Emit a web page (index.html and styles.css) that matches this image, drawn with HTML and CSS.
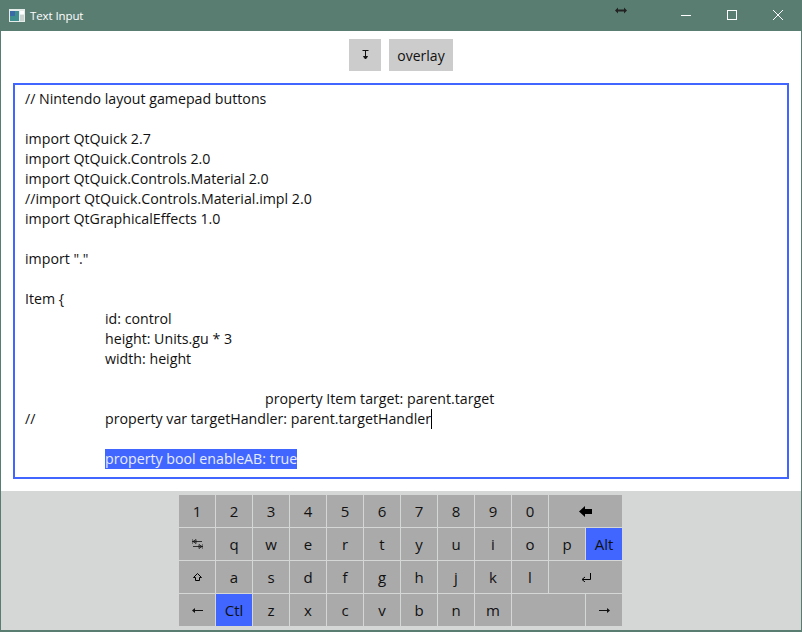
FILE: index.html
```html
<!DOCTYPE html>
<html lang="en">
<head>
<meta charset="utf-8">
<title>Text Input</title>
<link rel="stylesheet" href="styles.css">
</head>
<body>
<div class="window">
  <header class="titlebar">
    <svg class="app-icon" width="16" height="13" viewBox="0 0 16 13"><rect width="16" height="13" fill="#e6ecea"/><rect x="1" y="2" width="9" height="10" fill="#3f8f8f"/><rect x="1" y="2" width="5" height="5" fill="#3b6aa8"/><rect x="11" y="2" width="4" height="3" fill="#fff"/><rect x="11" y="6" width="4" height="6" fill="#c9d2cf"/></svg>
    <span class="title">Text Input</span>
    <div class="winbtns">
      <svg class="winbtn" width="46" height="31" viewBox="0 0 46 31"><path d="M18 15.500h10" stroke="#fff" fill="none"/></svg>
      <svg class="winbtn" width="46" height="31" viewBox="0 0 46 31"><rect x="18.500" y="10.500" width="9" height="9" stroke="#fff" fill="none"/></svg>
      <svg class="winbtn" width="46" height="31" viewBox="0 0 46 31"><path d="M18 10l10 10M28 10L18 20" stroke="#fff" fill="none"/></svg>
    </div>
  </header>
  <svg class="resize-cursor" width="12" height="7" viewBox="0 0 12 7"><path d="M0 3.500L3 .5V2.500H9V.5L12 3.500 9 6.500V4.500H3V6.500Z" fill="#222"/></svg>
  <main class="content">
    <div class="toolbar">
      <button class="tool tool-icon"><svg width="7" height="10" viewBox="0 0 7 10"><path d="M.5 .5h6M3.500 .5v8M1.500 6.500l2 2.500 2-2.500Z" stroke="#111" fill="#111"/></svg></button>
      <button class="tool tool-text">overlay</button>
    </div>
    <div class="editor"><pre class="code">// Nintendo layout gamepad buttons

import QtQuick 2.7
import QtQuick.Controls 2.0
import QtQuick.Controls.Material 2.0
//import QtQuick.Controls.Material.impl 2.0
import QtGraphicalEffects 1.0

import "."

Item {
	id: control
	height: Units.gu * 3
	width: height

			property Item target: parent.target
//	property var targetHandler: parent.targetHandler<span class="caret"></span>

	<span class="selected">property bool enableAB: true</span></pre></div>
  </main>
  <section class="kb-panel">
    <div class="keyboard">
      <div class="key">1</div><div class="key">2</div><div class="key">3</div><div class="key">4</div><div class="key">5</div><div class="key">6</div><div class="key">7</div><div class="key">8</div><div class="key">9</div><div class="key">0</div>
      <div class="key span2"><svg width="13" height="11" viewBox="0 0 13 11"><path d="M0 5.500L6 0V3H13V8H6V11Z" fill="#000"/></svg></div>
      <div class="key"><svg width="11" height="10" viewBox="0 0 11 10"><path d="M0 2.500h10M0 0v5M1 2.500l3-2v4ZM1 7.500h10M11 5v5M10 7.500l-3-2v4Z" stroke="#111" stroke-width=".8" fill="none"/></svg></div>
      <div class="key">q</div><div class="key">w</div><div class="key">e</div><div class="key">r</div><div class="key">t</div><div class="key">y</div><div class="key">u</div><div class="key">i</div><div class="key">o</div><div class="key">p</div>
      <div class="key key-on">Alt</div>
      <div class="key"><svg width="9" height="8" viewBox="0 0 9 8"><path d="M4.500 .5L8.500 4.500H6.500V7.500H2.500V4.500H.5Z" stroke="#000" fill="none"/></svg></div>
      <div class="key">a</div><div class="key">s</div><div class="key">d</div><div class="key">f</div><div class="key">g</div><div class="key">h</div><div class="key">j</div><div class="key">k</div><div class="key">l</div>
      <div class="key span2"><svg width="10" height="9" viewBox="0 0 10 9"><path d="M9.500 0V6.500H1.500M4 4L1 6.500 4 9" stroke="#000" fill="none"/></svg></div>
      <div class="key"><svg width="11" height="5" viewBox="0 0 11 5"><path d="M0 2.500L3 0V2H11V3H3V5Z" fill="#111"/></svg></div>
      <div class="key key-on">Ctl</div>
      <div class="key">z</div><div class="key">x</div><div class="key">c</div><div class="key">v</div><div class="key">b</div><div class="key">n</div><div class="key">m</div>
      <div class="key span2"></div>
      <div class="key"><svg width="11" height="5" viewBox="0 0 11 5"><path d="M11 2.500L8 0V2H0V3H8V5Z" fill="#111"/></svg></div>
    </div>
  </section>
</div>
</body>
</html>
```
FILE: styles.css
```css
* { box-sizing: border-box; }
html, body { margin: 0; height: 100%; }
body { font-family: "Open Sans", "Noto Sans", sans-serif; color: #111; overflow: hidden; }
.window {
  position: relative;
  width: 802px;
  height: 632px;
  display: flex;
  flex-direction: column;
  border: 1px solid #5a7d72;
  border-width: 0 1px 2px;
  background: #fff;
}
.titlebar {
  height: 31px;
  margin: 0 -1px;
  flex: none;
  display: flex;
  align-items: center;
  padding-left: 9px;
  background: #5a7d72;
  color: #fff;
}
.app-icon { flex: none; margin-right: 5px; }
.title { font-size: 11.5px; letter-spacing: -.1px; }
.winbtns { margin-left: auto; display: flex; margin-right: 1px; }
.winbtn { display: block; }
.resize-cursor { position: absolute; left: 614px; top: 7px; }
.content { flex: none; display: flex; flex-direction: column; }
.toolbar { flex: none; display: flex; justify-content: center; gap: 8px; padding-top: 8px; height: 52px; }
.tool {
  height: 32px;
  border: 0;
  padding: 0;
  background: #ccc;
  color: #111;
  font: inherit;
  font-size: 14px;
  display: flex;
  align-items: center;
  justify-content: center;
}
.tool-icon { width: 32px; }
.tool-text { width: 64px; }
.editor {
  flex: none;
  width: 776px;
  height: 396px;
  margin-left: 12px;
  padding: 4px 10px;
  border: 2px solid #4066ff;
}
.code {
  margin: 0;
  font-family: "Open Sans", "Noto Sans", sans-serif;
  font-size: 14.2px;
  line-height: 20px;
  tab-size: 80px;
  white-space: pre;
}
.caret {
  display: inline-block;
  width: 1px;
  height: 20px;
  vertical-align: top;
  background: #000;
}
.selected { background: #4066ff; color: #e8ecff; display: inline-block; }
.kb-panel {
  flex: 1;
  margin-top: 12px;
  padding: 4px 0 0 178px;
  background: #d5d7d6;
  min-height: 0;
}
.keyboard {
  display: grid;
  grid-template-columns: repeat(12, 36px);
  grid-auto-rows: 32px;
  gap: 1px;
}
.key {
  background: #aaa;
  color: #111;
  font-size: 15px;
  display: flex;
  align-items: center;
  justify-content: center;
}
.span2 { grid-column: span 2; }
.key-on { background: #4066ff; }
```
